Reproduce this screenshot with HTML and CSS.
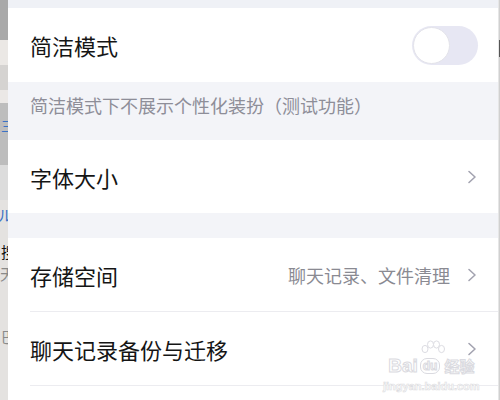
FILE: index.html
```html
<!DOCTYPE html>
<html lang="zh">
<head>
<meta charset="utf-8">
<link rel="stylesheet" href="styles.css">
</head>
<body>
<div class="screen">
  <div class="edge-left">
    <div class="eb eb1"></div>
    <div class="eb eb2"></div>
    <div class="eb eb3"></div>
    <div class="eb eb4"></div>
    <div class="eb eb5"><span class="eg blue">三</span></div>
    <div class="eb eb6"></div>
    <div class="eb eb7">
      <span class="eg g1 blue">ル</span>
      <span class="eg g2">搜</span>
      <span class="eg g3 grey">天</span>
      <span class="eg g4 grey">巴</span>
    </div>
  </div>
  <div class="panel">
    <div class="band band-top"></div>
    <div class="row row-first">
      <span class="title">简洁模式</span>
      <span class="toggle"><span class="knob"></span></span>
    </div>
    <div class="band band-desc">简洁模式下不展示个性化装扮（测试功能）</div>
    <div class="row">
      <span class="title">字体大小</span>
      <svg class="chev" viewBox="0 0 10 14" width="10" height="14"><path d="M2 1.5 L8 7 L2 12.5" fill="none" stroke="#a3a3b0" stroke-width="1.6" stroke-linecap="round" stroke-linejoin="round"/></svg>
    </div>
    <div class="band band-gap"></div>
    <div class="row lined">
      <span class="title">存储空间</span>
      <span class="right">
        <span class="sub">聊天记录、文件清理</span>
        <svg class="chev" viewBox="0 0 10 14" width="10" height="14"><path d="M2 1.5 L8 7 L2 12.5" fill="none" stroke="#a3a3b0" stroke-width="1.6" stroke-linecap="round" stroke-linejoin="round"/></svg>
      </span>
    </div>
    <div class="row lined">
      <span class="title">聊天记录备份与迁移</span>
      <svg class="chev" viewBox="0 0 10 14" width="10" height="14"><path d="M2 1.5 L8 7 L2 12.5" fill="none" stroke="#a3a3b0" stroke-width="1.6" stroke-linecap="round" stroke-linejoin="round"/></svg>
    </div>
    <div class="row-rest"></div>
    <div class="watermark">
      <svg class="paw" viewBox="0 0 26 18" width="26" height="18">
        <g fill="#fff" stroke="#dcdce2" stroke-width="1">
          <ellipse cx="5" cy="9" rx="3" ry="3.6"/>
          <ellipse cx="10.5" cy="4.5" rx="3" ry="3.6"/>
          <ellipse cx="16.5" cy="4.5" rx="3" ry="3.6"/>
          <ellipse cx="21.5" cy="9" rx="3" ry="3.6"/>
        </g>
      </svg>
      <div class="wm-main"><span class="wm-bai">Bai</span><span class="wm-du">du</span><span class="wm-jy">经验</span></div>
      <div class="wm-url">jingyan.baidu.com</div>
    </div>
  </div>
  <div class="edge-right">
    <div class="er er1"></div>
    <div class="er er2"></div>
    <div class="er er3"></div>
  </div>
</div>
</body>
</html>
```
FILE: styles.css
```css
html, body {
  margin: 0;
  padding: 0;
  background: #fff;
}
body {
  width: 500px;
  height: 400px;
  overflow: hidden;
  font-family: "Noto Sans CJK SC", "Noto Sans", sans-serif;
}
.screen {
  display: flex;
  width: 500px;
  height: 400px;
  overflow: hidden;
}
.edge-left {
  width: 8px;
  flex: none;
  display: flex;
  flex-direction: column;
  overflow: hidden;
}
.eb { flex: none; position: relative; overflow: hidden; }
.eb1 { height: 40px; background: #a9a9a9; }
.eb2 { height: 25px; background: #ebe8e5; }
.eb3 { height: 25px; background: #d5d3d1; }
.eb4 { height: 13px; background: #ebe8e6; }
.eb5 { height: 62px; background: #bdbdbd; display: flex; justify-content: flex-end; align-items: flex-start; padding-top: 14px; box-sizing: border-box; }
.eb6 { height: 35px; background: #dcdcdc; }
.eb7 { height: 200px; background: #e4e2e0; display: flex; flex-direction: column; align-items: flex-end; padding-top: 4px; }
.eg {
  font-size: 15px;
  line-height: 18px;
  white-space: nowrap;
  color: #111;
}
.eb5 .eg { margin-right: -6px; font-size: 13px; }
.blue { color: #3b73c6; }
.grey { color: #8a8a8a; }
.g1 { margin-right: -5px; margin-top: 2px; }
.g2 { margin-right: -8px; margin-top: 19px; }
.g3 { margin-right: -7px; margin-top: 4px; }
.g4 { margin-right: -8px; margin-top: 45px; }

.panel {
  flex: 1;
  position: relative;
  display: flex;
  flex-direction: column;
  background: #fff;
}
.band { background: #f3f4f8; flex: none; }
.band-top { height: 8px; background: #eff1f6; }
.band-gap { height: 25px; }
.band-desc {
  height: 58px;
  display: flex;
  align-items: center;
  padding-left: 22px;
  font-size: 18px;
  color: #8e8e98;
  padding-bottom: 12px;
  box-sizing: border-box;
}
.row {
  flex: none;
  height: 73px;
  display: flex;
  align-items: center;
  justify-content: space-between;
  padding-left: 22px;
  padding-right: 21px;
  box-sizing: border-box;
  background: #fff;
}
.row-first { height: 74px; padding-right: 20px; }
.lined { border-bottom: 1px solid #ececf0; margin-left: 22px; padding-left: 0; height: 74px; }
.title {
  font-size: 22px;
  color: #151515;
  line-height: 30px;
}
.right { display: flex; align-items: center; gap: 17px; }
.sub { font-size: 18px; color: #8a8a92; }
.chev { display: block; }
.toggle {
  width: 66px;
  height: 39px;
  border-radius: 20px;
  background: #e7e7f3;
  display: flex;
  align-items: center;
  padding-left: 1px;
  box-sizing: border-box;
}
.knob {
  width: 37px;
  height: 37px;
  border-radius: 50%;
  background: #fff;
  box-sizing: border-box;
  border: 1px solid #e3e3ea;
}
.row-rest { flex: 1; background: #fff; }

.edge-right {
  width: 2px;
  flex: none;
  display: flex;
  flex-direction: column;
  background: #d0d0d0;
  border-left: 1px solid #e6e6e6;
  box-sizing: border-box;
}
.er { flex: none; background: #d0d0d0; }
.er1 { height: 40px; }
.er2 { height: 17px; background: #555; }
.er3 { height: 343px; }

.watermark {
  position: absolute;
  left: 375px;
  top: 340px;
  display: flex;
  flex-direction: column;
  align-items: center;
  white-space: nowrap;
  font-family: "Liberation Sans", Arial, sans-serif;
}
.paw { margin-bottom: -3px; margin-left: 4px; }
.wm-main {
  display: flex;
  align-items: center;
  font-size: 19px;
  font-weight: bold;
  color: #fff;
  -webkit-text-stroke: 1px #dadae0;
  line-height: 22px;
  white-space: nowrap;
}
.wm-du {
  font-size: 12px;
  background: #fff;
  border: 1px solid #dadae0;
  border-radius: 7px;
  padding: 0 2px;
  margin: 0 2px;
  line-height: 14px;
}
.wm-jy {
  font-family: "Noto Sans CJK SC", sans-serif;
  font-size: 15px;
  font-weight: bold;
  margin-left: 2px;
}
.wm-url {
  font-size: 11px;
  font-weight: bold;
  color: #fff;
  -webkit-text-stroke: 0.6px #dcdce0;
  line-height: 14px;
  margin-top: 2px;
}
```
